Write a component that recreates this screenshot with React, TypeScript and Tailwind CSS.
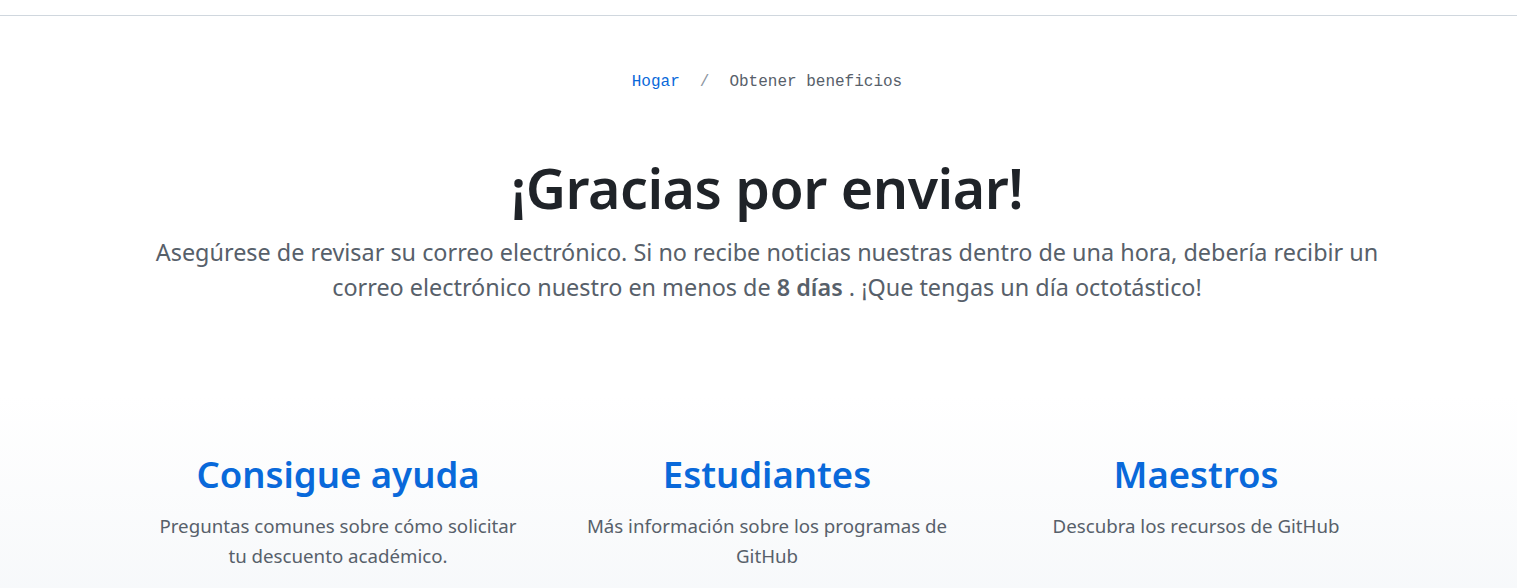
const links = [
  {
    title: "Consigue ayuda",
    text: "Preguntas comunes sobre cómo solicitar tu descuento académico.",
  },
  {
    title: "Estudiantes",
    text: "Más información sobre los programas de GitHub",
  },
  {
    title: "Maestros",
    text: "Descubra los recursos de GitHub",
  },
];

export default function App() {
  return (
    <div className="min-h-screen bg-white font-['Noto_Sans',sans-serif]">
      <div className="h-[16px] border-b border-[#d0d7de]" />

      <section className="pl-[17px] pt-[54px] text-center">
        <nav className="flex justify-center gap-[20px] font-['Liberation_Mono',monospace] text-[16px] leading-6">
          <a href="#" className="text-[#0969da]">
            Hogar
          </a>
          <span className="text-[#8c959f]">/</span>
          <span className="text-[#57606a]">Obtener beneficios</span>
        </nav>

        <h1 className="mt-[62px] text-[55.5px] font-semibold leading-[64px] tracking-[-0.5px] text-[#1f2328]">
          ¡Gracias por enviar!
        </h1>
        <p className="mx-auto mt-[15px] max-w-[1260px] text-[23.4px] leading-[35px] text-[#57606a]">
          Asegúrese de revisar su correo electrónico. Si no recibe noticias
          nuestras dentro de una hora, debería recibir un correo electrónico
          nuestro en menos de <strong className="font-semibold">8 días</strong>{" "}
          . ¡Que tengas un día octotástico!
        </p>
      </section>

      <section className="mt-[90px] bg-gradient-to-b from-white to-[#f6f8fa] pb-10 pl-[17px] pt-[53px]">
        <div className="mx-auto grid max-w-[1287px] grid-cols-3">
          {links.map((link) => (
            <div key={link.title} className="px-8 text-center">
              <h2 className="text-[36.5px] font-semibold leading-[52px] text-[#0969da]">
                {link.title}
              </h2>
              <p className="mx-auto mt-[11px] max-w-[372px] text-[18.7px] leading-[30px] text-[#57606a]">
                {link.text}
              </p>
            </div>
          ))}
        </div>
      </section>
    </div>
  );
}
